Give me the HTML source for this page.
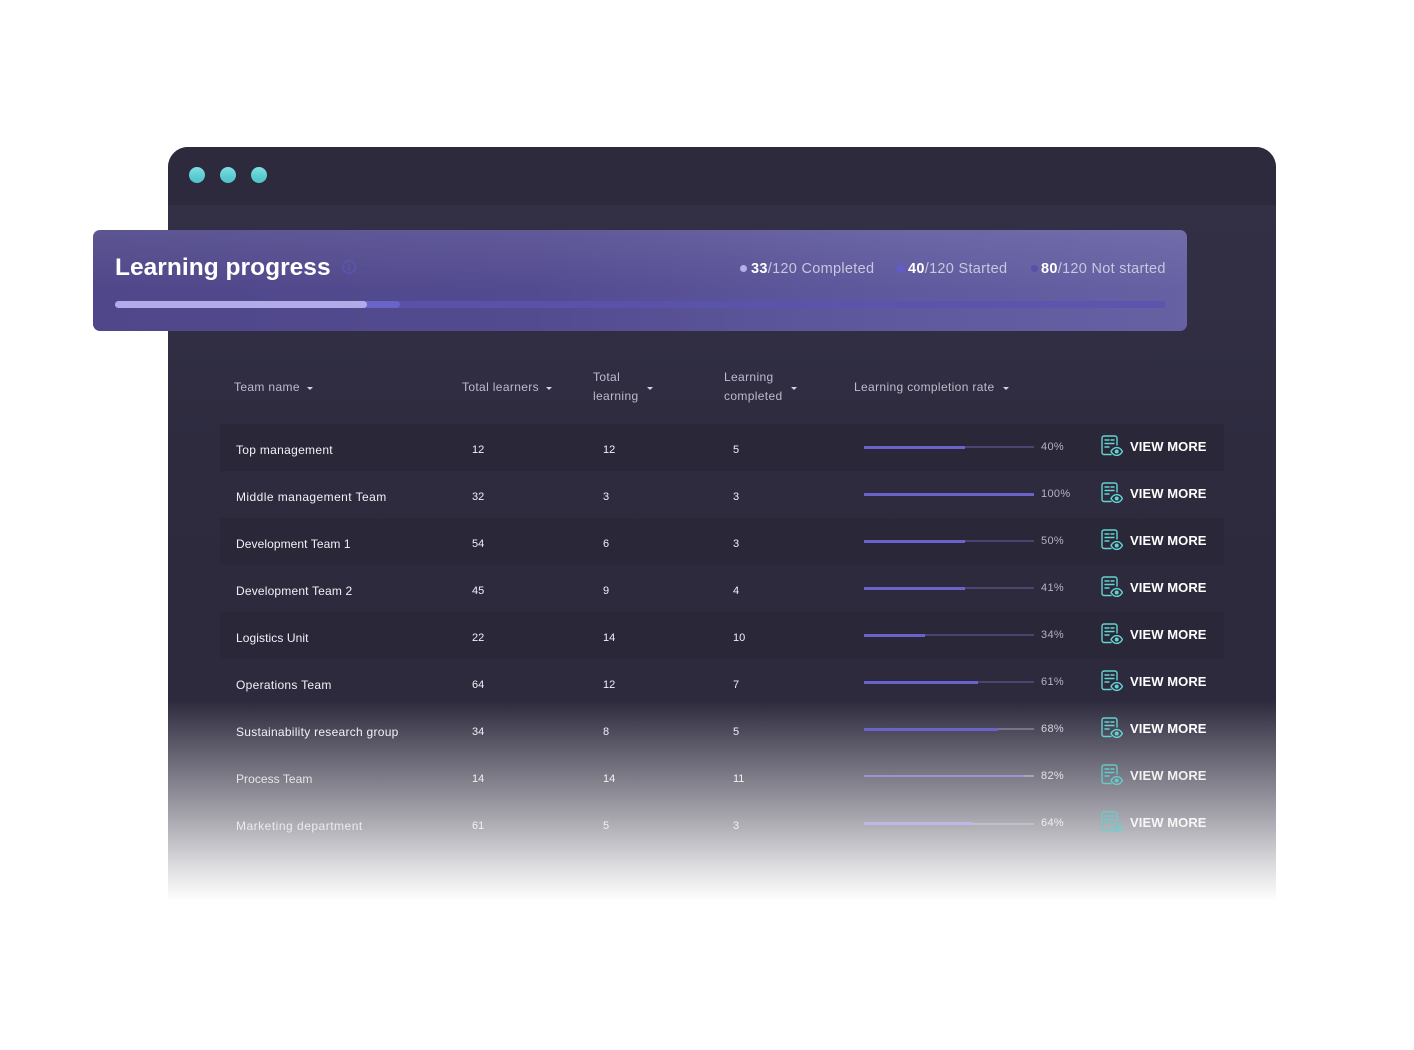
<!DOCTYPE html>
<html><head><meta charset="utf-8"><title>Learning progress</title>
<style>
html,body{margin:0;padding:0;background:#fff}
body{width:1414px;height:1050px;position:relative;overflow:hidden;font-family:"Liberation Sans",sans-serif;color:#fff}
.a{position:absolute;white-space:nowrap}
.win{position:absolute;left:168px;top:147px;width:1108px;height:753px;background:linear-gradient(to bottom,#332f45 58px,#312e43 200px,#2e2b3f 290px,#2c293c 100%);border-radius:20px 20px 0 0;overflow:hidden}
.top{position:absolute;left:0;top:0;width:100%;height:58px;background:#2d2a3e}
.dot{position:absolute;top:20px;width:16px;height:16px;border-radius:50%;background:linear-gradient(to bottom,#83e0e2,#5ccdd2 55%,#55c1c8)}
.row{position:absolute;left:220px;width:1004px;height:47px;background:#2a2738}
.h{font-size:12px;line-height:19px;color:#bdbbcb;letter-spacing:.35px}
.c{font-size:12px;line-height:14px;color:#f2f1f6;letter-spacing:.3px;transform:translateY(1px)}
.n{font-size:11px;line-height:14px;color:#f2f1f6;transform:translateY(1px)}
.p{font-size:11px;line-height:14px;color:#b5b3c2;letter-spacing:.35px;transform:translateY(1px)}
.v{font-size:13px;line-height:16px;font-weight:bold;color:#fff;letter-spacing:.08px;transform:translateY(1px)}
.t{position:absolute;left:864px;width:170px;height:2px;background:#4a4670}
.f{position:absolute;left:864px;height:3px;background:#6a63cb}
.car{position:absolute;width:0;height:0;border-left:3px solid transparent;border-right:3px solid transparent;border-top:3px solid #d5d3e0}
.ic{position:absolute;left:1101px;width:22px;height:22px}
.fade{position:absolute;left:160px;top:700px;width:1130px;height:201px;background:linear-gradient(to bottom,rgba(255,255,255,0) 0%,rgba(255,255,255,.2) 20%,rgba(255,255,255,.42) 42%,rgba(255,255,255,.62) 62%,rgba(255,255,255,.83) 82%,#fff 100%)}
.ban{position:absolute;left:93px;top:230px;width:1094px;height:101px;border-radius:7px;background:linear-gradient(to bottom,rgba(255,255,255,.08),rgba(255,255,255,0) 60%),linear-gradient(to right,#4f4789 0%,#534b90 40%,#5f5a9e 75%,#6561a3 100%)}
.ld{position:absolute;border-radius:50%}
.s{font-size:14.5px;line-height:18px;color:#c9c6dd;letter-spacing:.3px;transform:translateY(1px)}
.s b{color:#fff}
</style></head><body>
<svg width="0" height="0" style="position:absolute"><defs>
<symbol id="i" viewBox="0 0 22 22"><g fill="none" stroke="#62d3d0" stroke-width="1.4" stroke-linecap="round" stroke-linejoin="round"><path d="M10 19.500H3a2 2 0 0 1-2-2V3a2 2 0 0 1 2-2h11a2 2 0 0 1 2 2v7"/><path d="M4 5h4M10 5h3M4 8.500h9M4 12h4"/><path d="M10 16.500c1.500-2.600 3.400-3.900 5.700-3.900s4.300 1.300 5.700 3.900c-1.400 2.600-3.400 3.900-5.700 3.900S11.500 19.100 10 16.500z"/><circle cx="15.700" cy="16.500" r="1.300" fill="#62d3d0"/></g></symbol>
</defs></svg>

<div class="win"><div class="top"></div>
<div class="dot" style="left:21px"></div><div class="dot" style="left:52px"></div><div class="dot" style="left:83px"></div></div>

<div class="ban"></div>
<div class="a" style="left:115px;top:252px;font-size:24.5px;line-height:32px;font-weight:bold;letter-spacing:.03px">Learning progress</div>
<svg class="a" style="left:342px;top:260px" width="14" height="14" viewBox="0 0 14 14"><circle cx="7" cy="7" r="6.300" fill="none" stroke="#5f5ac0" stroke-width="1"/><path d="M7 6.200v4M7 3.700v1" stroke="#5f5ac0" stroke-width="1.200"/></svg>
<div class="ld" style="left:740px;top:265px;width:7px;height:7px;background:#b4afea"></div>
<div class="a s" style="left:751px;top:259px"><b>33</b>/120 Completed</div>
<div class="ld" style="left:896px;top:264px;width:9px;height:9px;background:#625cc4"></div>
<div class="a s" style="left:908px;top:259px"><b>40</b>/120 Started</div>
<div class="ld" style="left:1031px;top:265px;width:7px;height:7px;background:#5650ab"></div>
<div class="a s" style="left:1041px;top:259px"><b>80</b>/120 Not started</div>
<div class="a" style="left:115px;top:301px;width:1051px;height:7px;border-radius:4px;background:linear-gradient(to right,#5850a6,#5c55ae)"></div>
<div class="a" style="left:115px;top:301px;width:285px;height:7px;border-radius:4px;background:#6a63c9"></div>
<div class="a" style="left:115px;top:301px;width:252px;height:7px;border-radius:4px;background:#b1ace9"></div>

<div class="a h" style="left:234px;top:378px">Team name</div><div class="car" style="left:307px;top:387px"></div>
<div class="a h" style="left:462px;top:378px">Total learners</div><div class="car" style="left:546px;top:387px"></div>
<div class="a h" style="left:593px;top:368px">Total<br>learning</div><div class="car" style="left:647px;top:387px"></div>
<div class="a h" style="left:724px;top:368px">Learning<br>completed</div><div class="car" style="left:791px;top:387px"></div>
<div class="a h" style="left:854px;top:378px">Learning completion rate</div><div class="car" style="left:1003px;top:387px"></div>

<div class="row" style="top:424px"></div><div class="row" style="top:518px"></div><div class="row" style="top:612px"></div>

<div class="a c" style="left:236px;top:442px">Top management</div><div class="a n" style="left:472px;top:442px">12</div><div class="a n" style="left:603px;top:442px">12</div><div class="a n" style="left:733px;top:442px">5</div>
<div class="t" style="top:446px"></div><div class="f" style="top:445.500px;width:101px"></div><div class="a p" style="left:1041px;top:439px">40%</div>
<svg class="ic" style="top:435px"><use href="#i"/></svg><div class="a v" style="left:1130px;top:438px">VIEW MORE</div>

<div class="a c" style="left:236px;top:489px;letter-spacing:.43px">Middle management Team</div><div class="a n" style="left:472px;top:489px">32</div><div class="a n" style="left:603px;top:489px">3</div><div class="a n" style="left:733px;top:489px">3</div>
<div class="t" style="top:493px"></div><div class="f" style="top:492.500px;width:170px"></div><div class="a p" style="left:1041px;top:486px">100%</div>
<svg class="ic" style="top:482px"><use href="#i"/></svg><div class="a v" style="left:1130px;top:485px">VIEW MORE</div>

<div class="a c" style="left:236px;top:536px;letter-spacing:.08px">Development Team 1</div><div class="a n" style="left:472px;top:536px">54</div><div class="a n" style="left:603px;top:536px">6</div><div class="a n" style="left:733px;top:536px">3</div>
<div class="t" style="top:540px"></div><div class="f" style="top:539.500px;width:101px"></div><div class="a p" style="left:1041px;top:533px">50%</div>
<svg class="ic" style="top:529px"><use href="#i"/></svg><div class="a v" style="left:1130px;top:532px">VIEW MORE</div>

<div class="a c" style="left:236px;top:583px;letter-spacing:.18px">Development Team 2</div><div class="a n" style="left:472px;top:583px">45</div><div class="a n" style="left:603px;top:583px">9</div><div class="a n" style="left:733px;top:583px">4</div>
<div class="t" style="top:587px"></div><div class="f" style="top:586.500px;width:101px"></div><div class="a p" style="left:1041px;top:580px">41%</div>
<svg class="ic" style="top:576px"><use href="#i"/></svg><div class="a v" style="left:1130px;top:579px">VIEW MORE</div>

<div class="a c" style="left:236px;top:630px;letter-spacing:.08px">Logistics Unit</div><div class="a n" style="left:472px;top:630px">22</div><div class="a n" style="left:603px;top:630px">14</div><div class="a n" style="left:733px;top:630px">10</div>
<div class="t" style="top:634px"></div><div class="f" style="top:633.500px;width:61px"></div><div class="a p" style="left:1041px;top:627px">34%</div>
<svg class="ic" style="top:623px"><use href="#i"/></svg><div class="a v" style="left:1130px;top:626px">VIEW MORE</div>

<div class="a c" style="left:236px;top:677px">Operations Team</div><div class="a n" style="left:472px;top:677px">64</div><div class="a n" style="left:603px;top:677px">12</div><div class="a n" style="left:733px;top:677px">7</div>
<div class="t" style="top:681px"></div><div class="f" style="top:680.500px;width:114px"></div><div class="a p" style="left:1041px;top:674px">61%</div>
<svg class="ic" style="top:670px"><use href="#i"/></svg><div class="a v" style="left:1130px;top:673px">VIEW MORE</div>

<div class="fade"></div>

<div class="a c" style="left:236px;top:724px;letter-spacing:.27px">Sustainability research group</div><div class="a n" style="left:472px;top:724px">34</div><div class="a n" style="left:603px;top:724px">8</div><div class="a n" style="left:733px;top:724px">5</div>
<div class="t" style="top:728px;background:#77758a"></div><div class="f" style="top:727.500px;width:134px"></div><div class="a p" style="left:1041px;top:721px;color:#d4d3dc">68%</div>
<svg class="ic" style="top:717px"><use href="#i"/></svg><div class="a v" style="left:1130px;top:720px">VIEW MORE</div>

<div class="a c" style="left:236px;top:771px;opacity:.9;letter-spacing:.05px">Process Team</div><div class="a n" style="left:472px;top:771px">14</div><div class="a n" style="left:603px;top:771px">14</div><div class="a n" style="left:733px;top:771px">11</div>
<div class="t" style="top:775px;background:#a7a6b2"></div><div class="f" style="top:775px;height:2px;width:160px;background:#9a95d6"></div><div class="a p" style="left:1041px;top:768px;color:#e4e3ea">82%</div>
<svg class="ic" style="top:764px;opacity:.9"><use href="#i"/></svg><div class="a v" style="left:1130px;top:767px;opacity:.9">VIEW MORE</div>

<div class="a c" style="left:236px;top:818px;opacity:.9;letter-spacing:.5px">Marketing department</div><div class="a n" style="left:472px;top:818px">61</div><div class="a n" style="left:603px;top:818px">5</div><div class="a n" style="left:733px;top:818px">3</div>
<div class="t" style="top:823px;background:#c2c1c9"></div><div class="f" style="top:822px;width:109px;background:#bcb8e8"></div><div class="a p" style="left:1041px;top:815px;color:#eeeef2">64%</div>
<svg class="ic" style="top:811px;opacity:.85"><use href="#i"/></svg><div class="a v" style="left:1130px;top:814px;opacity:.9">VIEW MORE</div>
</body></html>
